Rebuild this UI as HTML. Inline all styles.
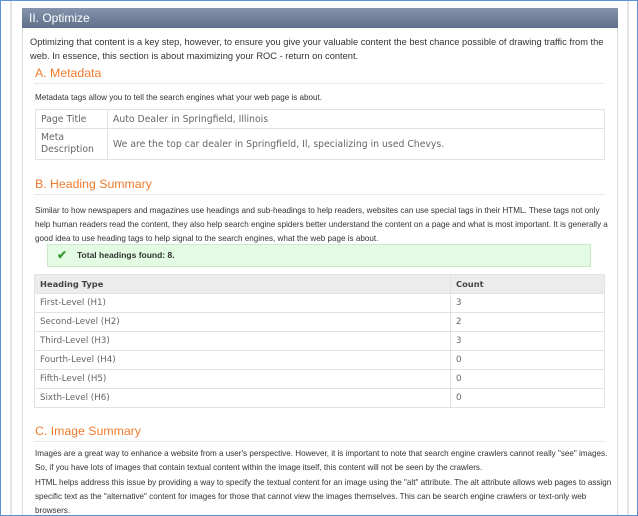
<!DOCTYPE html>
<html><head><meta charset="utf-8"><style>
*{margin:0;padding:0;box-sizing:border-box}
html,body{width:638px;height:516px;overflow:hidden}
body{background:#fff;font-family:"Liberation Sans",Arial,sans-serif;color:#444;position:relative}
.frame{position:absolute;left:0;top:0;width:638px;height:516px;border:1px solid #5b8fd6;z-index:5}
.l1{position:absolute;left:10px;top:0;width:2px;height:516px;background:#e4e4e4}
.l2{position:absolute;left:627px;top:0;width:2px;height:516px;background:#e4e4e4}
.panel{position:absolute;left:22px;top:8px;width:596px;height:508px;border:1px solid #d8dde4;border-top:none;border-bottom:none}
.hdr{position:absolute;left:22px;top:8px;width:596px;height:20px;background:linear-gradient(#8595ad,#5f6f89);color:#fff;font-size:12px;line-height:20px;padding-left:7px}
.a{position:absolute;white-space:nowrap}
.p{font-size:9.3px;color:#333;line-height:14px}
.s{font-size:8.1px;color:#333;line-height:14px}
.h{font-size:12.3px;color:#f07b2c}
.hr{position:absolute;left:34px;width:571px;height:1px;background:#e8e8e8}
table{position:absolute;border-collapse:collapse;font-family:"DejaVu Sans",sans-serif}
td,th{border:1px solid #e2e2e2;font-size:8.7px;color:#666;text-align:left;padding:0 5px;font-weight:normal}
.mt td{font-size:9.3px}
.ht th{background:#ececec;color:#444;font-weight:bold;font-size:8.3px}
.ok{position:absolute;left:47px;top:244px;width:544px;height:23px;background:#e2fbe2;border:1px solid #c8ecc8;font-size:8.5px;font-weight:bold;color:#333;line-height:21px;padding-left:29px}
</style></head><body>
<div class="frame"></div><div class="l1"></div><div class="l2"></div>
<div class="panel"></div>
<div class="hdr">II. Optimize</div>
<div class="a p" style="left:30px;top:35px">Optimizing that content is a key step, however, to ensure you give your valuable content the best chance possible of drawing traffic from the</div>
<div class="a p" style="left:30px;top:49px">web. In essence, this section is about maximizing your ROC - return on content.</div>
<div class="a h" style="left:35px;top:66px">A. Metadata</div>
<div class="hr" style="top:83px"></div>
<div class="a s" style="left:35px;top:91px">Metadata tags allow you to tell the search engines what your web page is about.</div>
<table class="mt" style="left:35px;top:109px;width:570px">
<tr style="height:19px"><td style="width:72px">Page Title</td><td>Auto Dealer in Springfield, Illinois</td></tr>
<tr style="height:31px"><td style="line-height:12px">Meta<br>Description</td><td>We are the top car dealer in Springfield, Il, specializing in used Chevys.</td></tr>
</table>
<div class="a h" style="left:35px;top:177px">B. Heading Summary</div>
<div class="hr" style="top:194px"></div>
<div class="a s" style="left:35px;top:204px">Similar to how newspapers and magazines use headings and sub-headings to help readers, websites can use special tags in their HTML. These tags not only</div>
<div class="a s" style="left:35px;top:218px">help human readers read the content, they also help search engine spiders better understand the content on a page and what is most important. It is generally a</div>
<div class="a s" style="left:35px;top:232px">good idea to use heading tags to help signal to the search engines, what the web page is about.</div>
<div class="ok"><span style="position:absolute;left:9px;top:0;color:#3a9a3a;font-size:12px">✔</span>Total headings found: 8.</div>
<table class="ht" style="left:34px;top:274px;width:571px">
<tr style="height:19px"><th style="width:416px">Heading Type</th><th>Count</th></tr>
<tr style="height:19px"><td>First-Level (H1)</td><td>3</td></tr>
<tr style="height:19px"><td>Second-Level (H2)</td><td>2</td></tr>
<tr style="height:19px"><td>Third-Level (H3)</td><td>3</td></tr>
<tr style="height:19px"><td>Fourth-Level (H4)</td><td>0</td></tr>
<tr style="height:19px"><td>Fifth-Level (H5)</td><td>0</td></tr>
<tr style="height:19px"><td>Sixth-Level (H6)</td><td>0</td></tr>
</table>
<div class="a h" style="left:35px;top:424px">C. Image Summary</div>
<div class="hr" style="top:441px"></div>
<div class="a s" style="left:35px;top:447px">Images are a great way to enhance a website from a user's perspective. However, it is important to note that search engine crawlers cannot really "see" images.</div>
<div class="a s" style="left:35px;top:461px">So, if you have lots of images that contain textual content within the image itself, this content will not be seen by the crawlers.</div>
<div class="a s" style="left:35px;top:476px">HTML helps address this issue by providing a way to specify the textual content for an image using the "alt" attribute. The alt attribute allows web pages to assign</div>
<div class="a s" style="left:35px;top:490px">specific text as the "alternative" content for images for those that cannot view the images themselves. This can be search engine crawlers or text-only web</div>
<div class="a s" style="left:35px;top:504px">browsers.</div>
</body></html>
